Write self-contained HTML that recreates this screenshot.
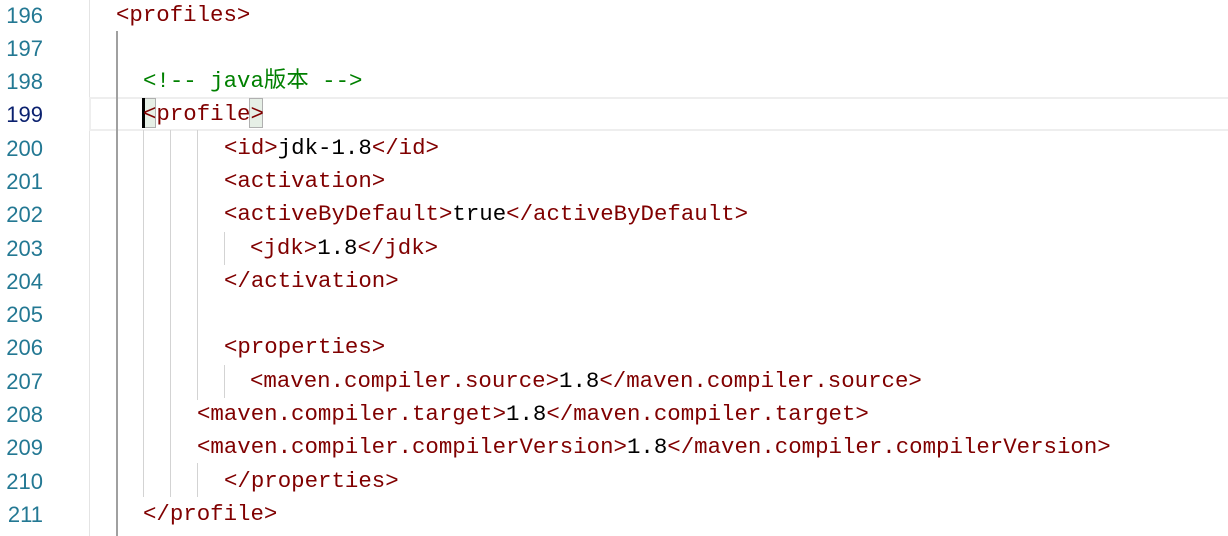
<!DOCTYPE html>
<html><head><meta charset="utf-8"><style>
body{margin:0;width:1228px;height:536px;background:#fff;overflow:hidden;position:relative;font-family:"Liberation Mono","Noto Sans CJK SC",monospace;font-size:22.4px}
.ln{position:absolute;left:0;width:43px;text-align:right;color:#237893;height:33.27px;line-height:33.27px;font-family:"Liberation Sans",sans-serif;font-size:22px}
.l{position:absolute;white-space:pre;height:33.27px;line-height:33.27px;color:#000}
.t{color:#800000}.c{color:#008000}
.g{position:absolute;width:1px;background:#d3d3d3}
div.ln,div.l{margin-top:1px}
</style></head><body>
<div class="g" style="left:89px;top:0;height:536px;background:#e4e4e4"></div>
<div style="position:absolute;left:89px;right:0;top:97px;height:30px;border:2px solid #eeeeee;border-right:none"></div>
<div class="g" style="left:116px;top:31px;height:505px;width:2px;background:#a0a0a0"></div>
<div class="g" style="left:143px;top:130px;height:367px"></div>
<div class="g" style="left:170px;top:130px;height:367px"></div>
<div class="g" style="left:197px;top:130px;height:270px"></div>
<div class="g" style="left:197px;top:463px;height:34px"></div>
<div class="g" style="left:224px;top:232px;height:33px"></div>
<div class="g" style="left:224px;top:365px;height:33px"></div>
<div style="position:absolute;left:143px;top:98px;width:11px;height:28px;background:#e6efe6;border:1px solid #b0b0b0"></div>
<div style="position:absolute;left:249px;top:98px;width:12px;height:28px;background:#e6efe6;border:1px solid #b0b0b0"></div>
<div style="position:absolute;left:142px;top:98px;width:3px;height:30px;background:#000"></div>
<div class="ln" style="top:-2px">196</div><div class="l" style="left:116px;top:-2px"><span class="t">&lt;profiles&gt;</span></div>
<div class="ln" style="top:31px">197</div>
<div class="ln" style="top:64px">198</div><div class="l c" style="left:143px;top:64px">&lt;!-- java版本 --&gt;</div>
<div class="ln" style="top:97px;color:#0b216f">199</div><div class="l" style="left:143px;top:97px"><span class="t">&lt;profile&gt;</span></div>
<div class="ln" style="top:131px">200</div><div class="l" style="left:224px;top:131px"><span class="t">&lt;id&gt;</span>jdk-1.8<span class="t">&lt;/id&gt;</span></div>
<div class="ln" style="top:164px">201</div><div class="l" style="left:224px;top:164px"><span class="t">&lt;activation&gt;</span></div>
<div class="ln" style="top:197px">202</div><div class="l" style="left:224px;top:197px"><span class="t">&lt;activeByDefault&gt;</span>true<span class="t">&lt;/activeByDefault&gt;</span></div>
<div class="ln" style="top:231px">203</div><div class="l" style="left:250px;top:231px"><span class="t">&lt;jdk&gt;</span>1.8<span class="t">&lt;/jdk&gt;</span></div>
<div class="ln" style="top:264px">204</div><div class="l" style="left:224px;top:264px"><span class="t">&lt;/activation&gt;</span></div>
<div class="ln" style="top:297px">205</div>
<div class="ln" style="top:330px">206</div><div class="l" style="left:224px;top:330px"><span class="t">&lt;properties&gt;</span></div>
<div class="ln" style="top:364px">207</div><div class="l" style="left:250px;top:364px"><span class="t">&lt;maven.compiler.source&gt;</span>1.8<span class="t">&lt;/maven.compiler.source&gt;</span></div>
<div class="ln" style="top:397px">208</div><div class="l" style="left:197px;top:397px"><span class="t">&lt;maven.compiler.target&gt;</span>1.8<span class="t">&lt;/maven.compiler.target&gt;</span></div>
<div class="ln" style="top:430px">209</div><div class="l" style="left:197px;top:430px"><span class="t">&lt;maven.compiler.compilerVersion&gt;</span>1.8<span class="t">&lt;/maven.compiler.compilerVersion&gt;</span></div>
<div class="ln" style="top:464px">210</div><div class="l" style="left:224px;top:464px"><span class="t">&lt;/properties&gt;</span></div>
<div class="ln" style="top:497px">211</div><div class="l" style="left:143px;top:497px"><span class="t">&lt;/profile&gt;</span></div>
</body></html>
